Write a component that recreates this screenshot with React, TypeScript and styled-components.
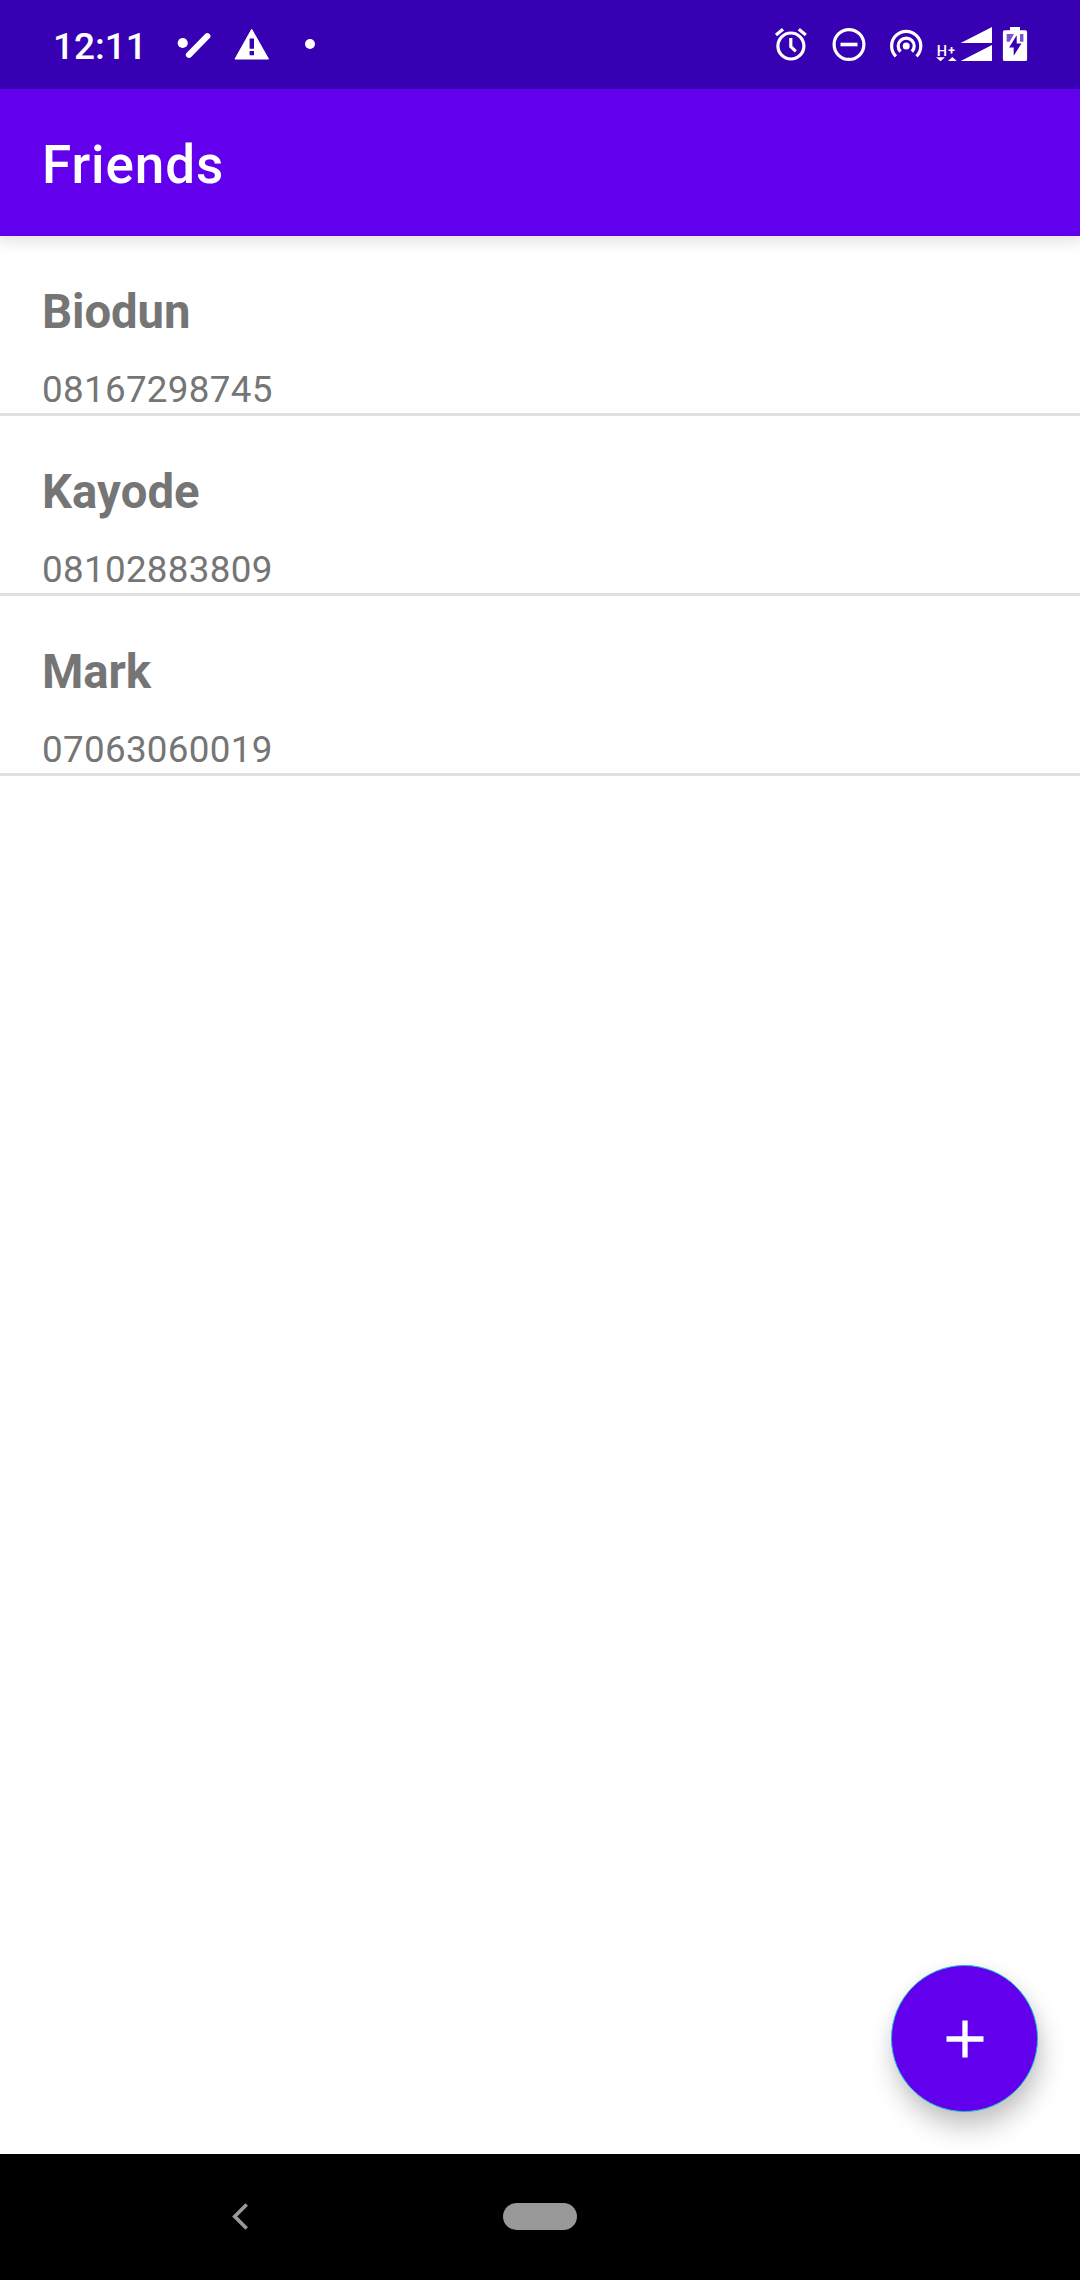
import React from "react";
import styled, { createGlobalStyle } from "styled-components";

const GlobalStyle = createGlobalStyle`
  *, *::before, *::after { box-sizing: border-box; }
  body { margin: 0; background: #fff; font-family: Roboto, "Noto Sans", sans-serif; }
`;

const Screen = styled.div`
  position: relative;
  display: flex;
  flex-direction: column;
  width: 1080px;
  height: 2280px;
  overflow: hidden;
  background: #fff;
`;

const StatusBar = styled.header`
  z-index: 2;
  display: flex;
  flex: none;
  justify-content: space-between;
  height: 89px;
  padding: 26px 52px 0 53px;
  background: #3700b3;
  color: #fff;
`;

const StatusGroup = styled.div<{ $gap: number }>`
  display: flex;
  align-items: flex-start;
  gap: ${(p) => p.$gap}px;
  height: 38px;
`;

const Clock = styled.time`
  width: 103px;
  font-size: 37px;
  font-weight: 500;
  line-height: 42px;
  white-space: nowrap;
`;

const Glyph = styled.svg`
  display: block;
  flex: none;
  overflow: visible;
`;

const AppBar = styled.div`
  z-index: 1;
  display: flex;
  flex: none;
  align-items: center;
  height: 147px;
  padding: 5px 42px 0;
  background: #6200ee;
  box-shadow: 0 3px 14px 3px rgba(0, 0, 0, 0.11);
`;

const Title = styled.h1`
  margin: 0;
  color: #fff;
  font-size: 53px;
  font-weight: 500;
  line-height: 62px;
  letter-spacing: 0.9px;
`;

const FriendList = styled.ul`
  flex: 1;
  margin: 0;
  padding: 0;
  list-style: none;
`;

const FriendRow = styled.li`
  display: flex;
  flex-direction: column;
  gap: 28px;
  height: 180px;
  padding: 49px 42px 0;
  border-bottom: 3px solid #e0e0e0;
  color: #757575;
`;

const Name = styled.span`
  font-size: 47.25px;
  font-weight: 700;
  font-kerning: none;
  line-height: 55px;
  letter-spacing: -0.1px;
`;

const Phone = styled.span`
  font-size: 36.75px;
  line-height: 43px;
  letter-spacing: 0.32px;
`;

const AddButton = styled.button`
  position: absolute;
  right: 42px;
  bottom: 168px;
  display: flex;
  align-items: center;
  justify-content: center;
  width: 147px;
  height: 147px;
  padding: 0;
  border: 1px solid #14bdd0;
  border-radius: 50%;
  background: #6200ee;
  box-shadow: 3px 16px 26px rgba(0, 0, 0, 0.22), 1px 2px 16px rgba(0, 0, 0, 0.05);
`;

const NavBar = styled.nav`
  display: flex;
  flex: none;
  align-items: center;
  z-index: 1;
  height: 126px;
  padding: 0 0 1px 232px;
  gap: 255px;
  background: #000;
`;

const HomePill = styled.div`
  width: 74px;
  height: 27px;
  border-radius: 14px;
  background: #999;
`;

const friends = [
  { name: "Biodun", phone: "08167298745" },
  { name: "Kayode", phone: "08102883809" },
  { name: "Mark", phone: "07063060019" },
];

const TaskIcon = () => (
  <Glyph width="34" height="38" viewBox="177 26 34 38">
    <circle cx="182.7" cy="43" r="5.1" fill="#fff" />
    <path d="M189 54.8L207.3 36.2" stroke="#fff" strokeWidth="6.2" strokeLinecap="round" />
  </Glyph>
);

const WarningIcon = () => (
  <Glyph width="36" height="38" viewBox="234 26 36 38">
    <path
      d="M251.7 29.3L268.5 59H235z"
      fill="#fff"
      stroke="#fff"
      strokeWidth="1"
      strokeLinejoin="round"
    />
    <path d="M249.6 38.5h4.4v10.3h-4.4zM249.6 51h4.4v4.3h-4.4z" fill="#3700b3" />
  </Glyph>
);

const MoreDot = () => (
  <Glyph width="10" height="38" viewBox="305 26 10 38">
    <circle cx="310" cy="44" r="5" fill="#fff" />
  </Glyph>
);

const AlarmIcon = () => (
  <Glyph width="34" height="38" viewBox="774.5 26 34 38" fill="none" stroke="#fff" strokeWidth="3.2">
    <circle cx="791.4" cy="46" r="13" />
    <path d="M776.5 35L783.5 29.2M799.3 29.2L806.3 35M791.3 38v8.6l5 4.8" />
  </Glyph>
);

const DoNotDisturbIcon = () => (
  <Glyph width="34" height="38" viewBox="831.5 26 34 38" fill="none" stroke="#fff">
    <circle cx="848.5" cy="44.5" r="14.9" strokeWidth="3.2" />
    <path d="M840 44.5h17" strokeWidth="3.6" />
  </Glyph>
);

const HotspotIcon = () => (
  <Glyph width="34" height="38" viewBox="889 26 34 38" fill="none" stroke="#fff" strokeWidth="3.2">
    <circle cx="906.2" cy="46" r="3.5" fill="#fff" stroke="none" />
    <path d="M895.9 56.3A14.6 14.6 0 1 1 916.5 56.3" />
    <path d="M900.5 51.7A8 8 0 1 1 911.9 51.7" />
  </Glyph>
);

const SignalIcon = () => (
  <Glyph width="56" height="38" viewBox="936 26 56 38" fill="#fff">
    <text x="936.7" y="55.6" fontSize="14.5" fontWeight="500" fontFamily="Roboto, sans-serif">
      H
    </text>
    <text x="948.2" y="55.4" fontSize="12" fontWeight="700" fontFamily="Roboto, sans-serif">
      +
    </text>
    <path d="M936 57.3h9l-4.5 3.9zM948 61l4.4-3.9 4.4 3.9z" />
    <path d="M960.7 43L992 27v16zM960.7 61L992 45v16z" />
  </Glyph>
);

const BatteryIcon = () => (
  <Glyph width="25" height="38" viewBox="1003 26 25 38">
    <path
      d="M1010 27h10v3.3h5.5a1.6 1.6 0 0 1 1.6 1.6v27.5a1.6 1.6 0 0 1-1.6 1.6h-21a1.6 1.6 0 0 1-1.6-1.6v-27.5a1.6 1.6 0 0 1 1.6-1.6h5.5z"
      fill="#fff"
    />
    <path d="M1006.7 34h7.3l-4.4 7.7h-2.9zM1020 34h3.4v7.7h-3.4z" fill="#7a52cf" />
    <path d="M1016.7 35.3v8.3h4.7l-7.7 12.2v-8.3h-4.6z" fill="#3700b3" />
  </Glyph>
);

export default function App() {
  return (
    <Screen>
      <GlobalStyle />
      <StatusBar>
        <StatusGroup $gap={21}>
          <Clock>12:11</Clock>
          <StatusGroup $gap={35}>
            <StatusGroup $gap={23}>
              <TaskIcon />
              <WarningIcon />
            </StatusGroup>
            <MoreDot />
          </StatusGroup>
        </StatusGroup>
        <StatusGroup $gap={11}>
          <StatusGroup $gap={13}>
            <StatusGroup $gap={23.5}>
              <AlarmIcon />
              <DoNotDisturbIcon />
              <HotspotIcon />
            </StatusGroup>
            <SignalIcon />
          </StatusGroup>
          <BatteryIcon />
        </StatusGroup>
      </StatusBar>
      <AppBar>
        <Title>Friends</Title>
      </AppBar>
      <FriendList>
        {friends.map((friend) => (
          <FriendRow key={friend.phone}>
            <Name>{friend.name}</Name>
            <Phone>{friend.phone}</Phone>
          </FriendRow>
        ))}
      </FriendList>
      <AddButton aria-label="Add friend">
        <Glyph width="38" height="38" viewBox="0 0 38 38">
          <path d="M0.5 19h37M19 0.5v37" stroke="#fff" strokeWidth="5.3" />
        </Glyph>
      </AddButton>
      <NavBar>
        <Glyph width="16" height="27" viewBox="0 0 16 27" fill="none">
          <path d="M14.7 1.5L2.7 13.5L14.7 25.5" stroke="#999" strokeWidth="3.7" />
        </Glyph>
        <HomePill />
      </NavBar>
    </Screen>
  );
}
